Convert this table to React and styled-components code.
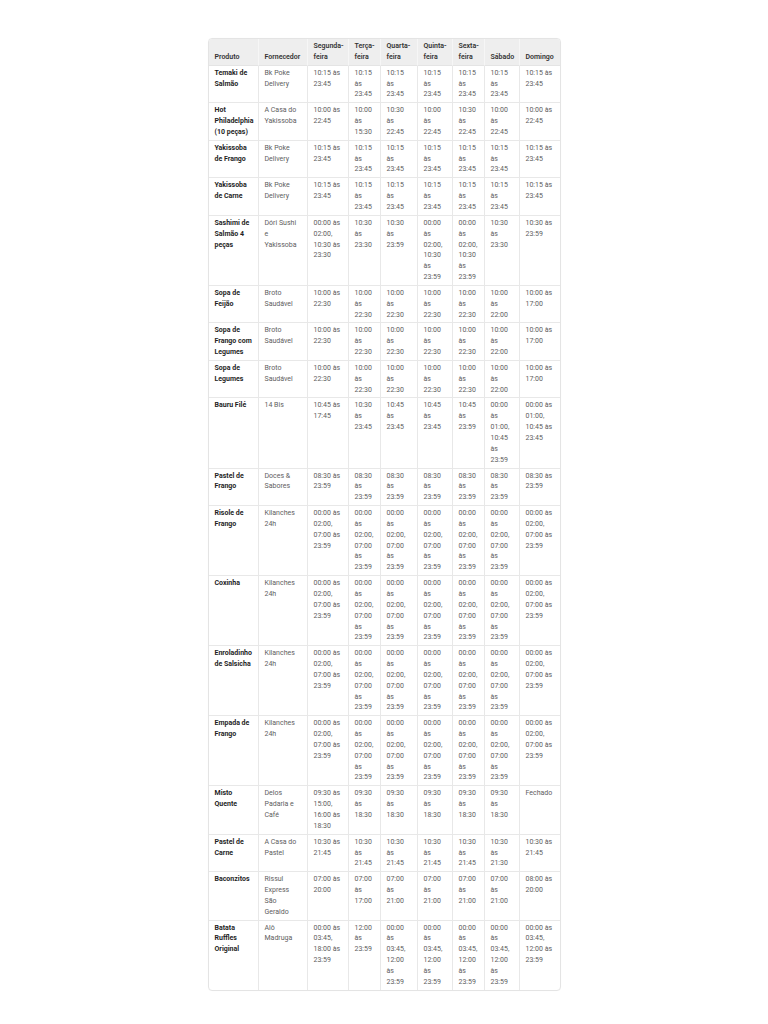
import React from 'react'
import styled, { createGlobalStyle } from 'styled-components'

const GlobalStyle = createGlobalStyle`
    html, body {
        margin: 0;
        padding: 0;
        background: #ffffff;
    }
    body {
        font-family: Roboto, "Liberation Sans", Arial, sans-serif;
    }
`

const DAYS = ['Segunda-feira', 'Terça-feira', 'Quarta-feira', 'Quinta-feira', 'Sexta-feira', 'Sábado', 'Domingo']
const WIDTHS = [50, 49, 41, 32, 37, 35, 32, 35, 40]

const twoShifts = '00:00 às 02:00, 07:00 às 23:59'

const rows = [
    { product: 'Temaki de Salmão', supplier: 'Bk Poke Delivery', hours: Array(7).fill('10:15 às 23:45') },
    {
        product: 'Hot Philadelphia (10 peças)',
        supplier: 'A Casa do Yakissoba',
        hours: ['10:00 às 22:45', '10:00 às 15:30', '10:30 às 22:45', '10:00 às 22:45', '10:30 às 22:45', '10:00 às 22:45', '10:00 às 22:45'],
    },
    { product: 'Yakissoba de Frango', supplier: 'Bk Poke Delivery', hours: Array(7).fill('10:15 às 23:45') },
    { product: 'Yakissoba de Carne', supplier: 'Bk Poke Delivery', hours: Array(7).fill('10:15 às 23:45') },
    {
        product: 'Sashimi de Salmão 4 peças',
        supplier: 'Dóri Sushi e Yakissoba',
        hours: [
            '00:00 às 02:00, 10:30 às 23:30',
            '10:30 às 23:30',
            '10:30 às 23:59',
            '00:00 às 02:00, 10:30 às 23:59',
            '00:00 às 02:00, 10:30 às 23:59',
            '10:30 às 23:30',
            '10:30 às 23:59',
        ],
    },
    {
        product: 'Sopa de Feijão',
        supplier: 'Broto Saudável',
        hours: ['10:00 às 22:30', '10:00 às 22:30', '10:00 às 22:30', '10:00 às 22:30', '10:00 às 22:30', '10:00 às 22:00', '10:00 às 17:00'],
    },
    {
        product: 'Sopa de Frango com Legumes',
        supplier: 'Broto Saudável',
        hours: ['10:00 às 22:30', '10:00 às 22:30', '10:00 às 22:30', '10:00 às 22:30', '10:00 às 22:30', '10:00 às 22:00', '10:00 às 17:00'],
    },
    {
        product: 'Sopa de Legumes',
        supplier: 'Broto Saudável',
        hours: ['10:00 às 22:30', '10:00 às 22:30', '10:00 às 22:30', '10:00 às 22:30', '10:00 às 22:30', '10:00 às 22:00', '10:00 às 17:00'],
    },
    {
        product: 'Bauru Filé',
        supplier: '14 Bis',
        hours: [
            '10:45 às 17:45',
            '10:30 às 23:45',
            '10:45 às 23:45',
            '10:45 às 23:45',
            '10:45 às 23:59',
            '00:00 às 01:00, 10:45 às 23:59',
            '00:00 às 01:00, 10:45 às 23:45',
        ],
    },
    { product: 'Pastel de Frango', supplier: 'Doces & Sabores', hours: Array(7).fill('08:30 às 23:59') },
    { product: 'Risole de Frango', supplier: 'Kilanches 24h', hours: Array(7).fill(twoShifts) },
    { product: 'Coxinha', supplier: 'Kilanches 24h', hours: Array(7).fill(twoShifts) },
    { product: 'Enroladinho de Salsicha', supplier: 'Kilanches 24h', hours: Array(7).fill(twoShifts) },
    { product: 'Empada de Frango', supplier: 'Kilanches 24h', hours: Array(7).fill(twoShifts) },
    {
        product: 'Misto Quente',
        supplier: 'Delos Padaria e Café',
        hours: ['09:30 às 15:00, 16:00 às 18:30', '09:30 às 18:30', '09:30 às 18:30', '09:30 às 18:30', '09:30 às 18:30', '09:30 às 18:30', 'Fechado'],
    },
    {
        product: 'Pastel de Carne',
        supplier: 'A Casa do Pastel',
        hours: ['10:30 às 21:45', '10:30 às 21:45', '10:30 às 21:45', '10:30 às 21:45', '10:30 às 21:45', '10:30 às 21:30', '10:30 às 21:45'],
    },
    {
        product: 'Baconzitos',
        supplier: 'Rissul Express São Geraldo',
        hours: ['07:00 às 20:00', '07:00 às 17:00', '07:00 às 21:00', '07:00 às 21:00', '07:00 às 21:00', '07:00 às 21:00', '08:00 às 20:00'],
    },
    {
        product: 'Batata Ruffles Original',
        supplier: 'Alô Madruga',
        hours: [
            '00:00 às 03:45, 18:00 às 23:59',
            '12:00 às 23:59',
            '00:00 às 03:45, 12:00 às 23:59',
            '00:00 às 03:45, 12:00 às 23:59',
            '00:00 às 03:45, 12:00 às 23:59',
            '00:00 às 03:45, 12:00 às 23:59',
            '00:00 às 03:45, 12:00 às 23:59',
        ],
    },
]

function App() {
    return (
        <Page>
            <GlobalStyle />
            <TableWrap>
                <Table>
                    <colgroup>
                        {WIDTHS.map((w, i) => (
                            <Col key={i} $w={w} />
                        ))}
                    </colgroup>
                    <thead>
                        <tr>
                            <Th>Produto</Th>
                            <Th>Fornecedor</Th>
                            {DAYS.map(day => (
                                <Th key={day}>{day}</Th>
                            ))}
                        </tr>
                    </thead>
                    <tbody>
                        {rows.map(row => (
                            <Tr key={row.product}>
                                <Td $strong>{row.product}</Td>
                                <Td>{row.supplier}</Td>
                                {row.hours.map((h, i) => (
                                    <Td key={i}>{h}</Td>
                                ))}
                            </Tr>
                        ))}
                    </tbody>
                </Table>
            </TableWrap>
        </Page>
    )
}

export default App

const Page = styled.div`
    display: flex;
    justify-content: center;
    padding: 38px 0 36px;
`

const TableWrap = styled.div`
    border: 1px solid #e4e4e4;
    border-radius: 4px;
    overflow: hidden;
    box-shadow: 0 0 1px rgba(0, 0, 0, 0.04);
`

const Table = styled.table`
    border-collapse: separate;
    border-spacing: 0;
    table-layout: fixed;
    width: 350px;
    font-size: 7px;
    line-height: 10.85px;
`

const Col = styled.col`
    width: ${p => p.$w}px;
`

const Th = styled.th`
    background: #eeeeee;
    color: #333333;
    font-weight: 600;
    text-align: left;
    vertical-align: bottom;
    padding: 2px 5px 2px 6px;
    border-right: 1px solid #f6f6f6;
    border-bottom: 1px solid #e4e4e4;

    &:last-child {
        border-right: none;
    }
`

const Tr = styled.tr`
    &:last-child td {
        border-bottom: none;
    }
`

const Td = styled.td`
    color: ${p => (p.$strong ? '#1f1f1f' : '#5e5e5e')};
    font-weight: ${p => (p.$strong ? 700 : 400)};
    text-align: left;
    vertical-align: top;
    padding: 2px 5px 2px 6px;
    border-right: 1px solid #e8e8e8;
    border-bottom: 1px solid #e8e8e8;
    overflow-wrap: normal;

    &:last-child {
        border-right: none;
    }
`
